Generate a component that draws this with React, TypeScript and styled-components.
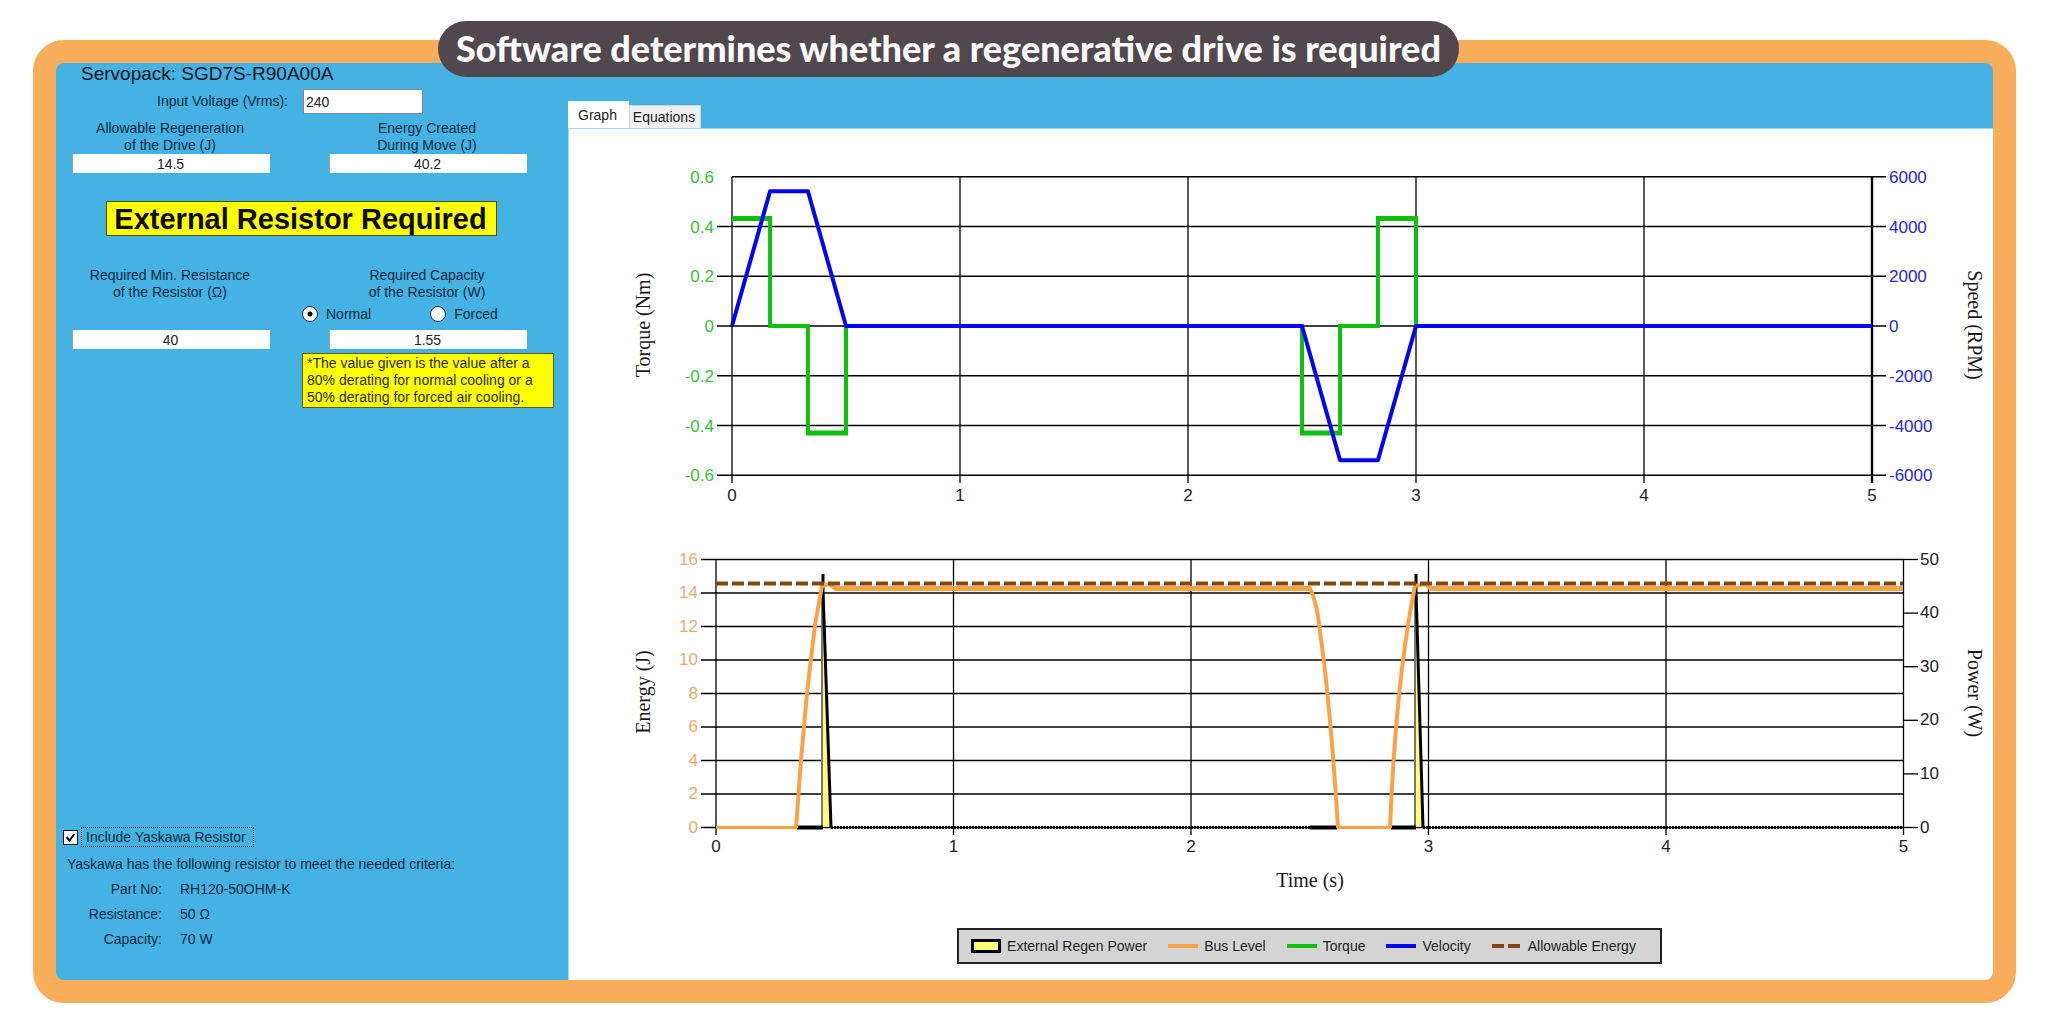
import React from "react";
import styled, { createGlobalStyle } from "styled-components";

const UI_FONT = '"Liberation Sans", Arial, sans-serif';
const SERIF_FONT = '"Liberation Serif", "Times New Roman", serif';

const GlobalStyle = createGlobalStyle`
  *, *::before, *::after { box-sizing: border-box; }
  body { margin: 0; background: #fff; }
  button, input { font: inherit; color: inherit; margin: 0; }
`;

const Page = styled.div`
  position: relative;
  display: flex;
  min-height: 100vh;
  padding: 40px 38px 31px 33px;
  font-family: ${UI_FONT};
  font-size: 14px;
  line-height: 17px;
  color: #06283f;
`;

const Banner = styled.h1`
  position: absolute;
  top: 21px;
  left: 438px;
  height: 56px;
  margin: 0;
  padding: 0 18px;
  border-radius: 28px;
  background: #50484d;
  color: #fafafa;
  font-family: Lato, sans-serif;
  font-size: 36px;
  font-weight: 900;
  line-height: 54px;
  white-space: nowrap;
`;

const Frame = styled.main`
  display: flex;
  flex: 1;
  overflow: hidden;
  border: 23px solid #faad5b;
  border-radius: 31px;
  background: #44b3e4;
`;

const Sidebar = styled.section`
  display: flex;
  flex-direction: column;
  flex: none;
  width: 512px;
  padding: 0 14px 28px 16px;
`;

const DriveName = styled.h2`
  margin: 0 0 4px 9px;
  color: #04121c;
  font-size: 19px;
  font-weight: 400;
  line-height: 22px;
`;

const VoltageRow = styled.div`
  display: flex;
  align-items: center;
  gap: 15px;
  margin-bottom: 6px;

  label {
    width: 216px;
    text-align: right;
  }
`;

const VoltageInput = styled.input`
  width: 120px;
  height: 25px;
  padding: 0 2px;
  border: 1px solid #7b8a94;
  background: #fff;
  color: #222;
`;

const Pair = styled.div`
  display: grid;
  grid-template-columns: 198px 252px;
  column-gap: 32px;
`;

const Reading = styled.div`
  display: flex;
  flex-direction: column;
  justify-content: space-between;
  align-items: center;
  text-align: center;
`;

const ReadingLabel = styled.label`
  padding-right: 2px;
  white-space: pre-line;
`;

const ReadingValue = styled.input`
  width: 198px;
  height: 19px;
  padding: 0 2px 0 0;
  border: 0;
  border-left: 1px solid #8fa5b2;
  background: #fff;
  color: #222;
  text-align: center;
`;

const Verdict = styled.strong`
  width: 391px;
  height: 35px;
  margin: 28px 0 31px 34px;
  padding-right: 2px;
  border: 1px solid #4c4c1c;
  background: #ff0;
  color: #0a0a00;
  font-size: 29px;
  line-height: 34px;
  text-align: center;
`;

const CoolingOptions = styled.div`
  display: flex;
  gap: 59px;
  align-self: flex-start;
  margin: 4px 0 7px;
`;

const CoolingOption = styled.label`
  display: flex;
  align-items: center;
  gap: 8px;
  height: 18px;
`;

const Radio = styled.input`
  appearance: none;
  width: 16px;
  height: 16px;
  border: 1px solid #1c2a33;
  border-radius: 50%;
  background: #fff;

  &:checked {
    background: radial-gradient(circle, #000 0 2px, #fff 3px);
  }
`;

const NoteRow = styled.div`
  display: flex;
  justify-content: flex-end;
  margin-top: 4px;
`;

const Note = styled.p`
  width: 252px;
  margin: 0;
  padding: 1px 4px;
  border: 1px solid #5d5a1a;
  background: #ff0;
  color: #2b2b00;
`;

const ResistorInfo = styled.section`
  margin: auto 0 0 -9px;
`;

const IncludeRow = styled.div`
  display: flex;
  align-items: center;
  gap: 4px;
  height: 20px;

  label {
    padding: 0 7px 0 4px;
    outline: 1px dotted #0b2a3a;
    line-height: 18px;
  }
`;

const TickHolder = styled.span`
  display: grid;
  width: 15px;
  height: 15px;

  > * { grid-area: 1 / 1; }
  svg { pointer-events: none; }
`;

const TickBox = styled.input`
  appearance: none;
  width: 15px;
  height: 15px;
  border: 1px solid #111;
  background: #fff;

  & + svg { visibility: hidden; }
  &:checked + svg { visibility: visible; }
`;

const Availability = styled.p`
  margin: 8px 0 4px 4px;
  line-height: 18px;
`;

const Specs = styled.dl`
  display: grid;
  grid-template-columns: 99px auto;
  column-gap: 18px;
  margin: 0;
  line-height: 25px;

  dt { text-align: right; }
  dd { margin: 0; }
`;

const Workspace = styled.section`
  display: flex;
  flex-direction: column;
  flex: 1;
  min-width: 0;
  padding-top: 38px;
`;

const TabStrip = styled.div`
  display: flex;
  align-items: flex-end;
  height: 27px;
`;

const Tab = styled.button<{ $active: boolean }>`
  width: ${(p) => (p.$active ? 61 : 72)}px;
  height: ${(p) => (p.$active ? 27 : 23)}px;
  padding: 0 2px 0 0;
  border: 1px solid ${(p) => (p.$active ? "#fff" : "#cfd4d8")};
  border-bottom: 0;
  background: ${(p) => (p.$active ? "#fff" : "#f0f0f0")};
  color: #1c1c1c;
`;

const ChartPanel = styled.div`
  flex: 1;
  background: #fff;
  box-shadow: inset 1px 1px #a5d6f0;
`;

const Plot = styled.svg`
  display: block;
  width: 100%;
  height: auto;
`;

const TickText = styled.text`
  font-family: ${UI_FONT};
  font-size: 17px;
`;

const AxisTitle = styled.text`
  fill: #1a1a1a;
  font-family: ${SERIF_FONT};
  font-size: 20px;
  text-anchor: middle;
`;

const LegendRow = styled.div`
  display: flex;
  justify-content: center;
  padding: 16px 0 16px 58px;
`;

const Legend = styled.ul`
  display: flex;
  align-items: center;
  gap: 21px;
  height: 36px;
  margin: 0;
  padding: 0 24px 0 12px;
  border: 2px solid #222;
  background: #d4d4d4;
  color: #222;
  list-style: none;
`;

const LegendItem = styled.li`
  display: flex;
  align-items: center;
  gap: 6px;
`;

const GREEN = "#0bc10b";
const BLUE = "#0404f5";
const ORANGE = "#f9a344";
const BROWN = "#80490f";

type Point = [number, number];

const toPath = (points: Point[], x: (v: number) => number, y: (v: number) => number) =>
  points.map(([a, b], i) => `${i ? "L" : "M"}${x(a)} ${y(b)}`).join("");

const SECONDS = [0, 1, 2, 3, 4, 5];

function MotionChart() {
  const x = (t: number) => 164 + 228 * t;
  const yT = (v: number) => 198 - v * 248.75;
  const yS = (v: number) => 198 - v * 0.024875;
  const torque: Point[] = [
    [0, 0.432], [0.167, 0.432], [0.167, 0], [0.333, 0], [0.333, -0.43], [0.5, -0.43], [0.5, 0],
    [2.5, 0], [2.5, -0.43], [2.667, -0.43], [2.667, 0], [2.833, 0], [2.833, 0.432], [3, 0.432], [3, 0], [5, 0],
  ];
  const speed: Point[] = [
    [0, 0], [0.167, 5420], [0.333, 5420], [0.5, 0], [2.5, 0], [2.667, -5400], [2.833, -5400], [3, 0], [5, 0],
  ];
  return (
    <Plot viewBox="0 0 1425 392" role="img" aria-label="Torque and speed over time">
      <g stroke="#000" strokeWidth={1.3}>
        {[0.6, 0.4, 0.2, 0, -0.2, -0.4, -0.6].map((v) => (
          <line key={v} x1={v === 0.6 ? 164 : 149} x2={1318} y1={yT(v)} y2={yT(v)} />
        ))}
        {SECONDS.map((t) => (
          <line key={t} x1={x(t)} x2={x(t)} y1={49} y2={355} strokeWidth={t === 5 ? 2.4 : 1.3} />
        ))}
      </g>
      {[0.6, 0.4, 0.2, 0, -0.2, -0.4, -0.6].map((v) => (
        <TickText key={v} x={146} y={yT(v) + 6} textAnchor="end" fill="#2fc52f">{v}</TickText>
      ))}
      {[6000, 4000, 2000, 0, -2000, -4000, -6000].map((v) => (
        <TickText key={v} x={1321} y={yS(v) + 6} fill="#2626e0">{v}</TickText>
      ))}
      {SECONDS.map((t) => (
        <TickText key={t} x={x(t)} y={373} textAnchor="middle" fill="#222">{t}</TickText>
      ))}
      <AxisTitle transform="translate(82 197) rotate(-90)">Torque (Nm)</AxisTitle>
      <AxisTitle transform="translate(1400 197) rotate(90)">Speed (RPM)</AxisTitle>
      <path d={toPath(torque, x, yT)} fill="none" stroke={GREEN} strokeWidth={4} />
      <path d="M164 90.5H204M808 90.5H850M238 305H280M732 305H774" stroke={GREEN} strokeWidth={5} />
      <path d={toPath(speed, x, yS)} fill="none" stroke={BLUE} strokeWidth={4} strokeLinejoin="round" />
    </Plot>
  );
}

function EnergyChart() {
  const x = (t: number) => 148 + 237.5 * t;
  const yE = (v: number) => 307.5 - v * 16.75;
  const yP = (v: number) => 307.5 - v * 5.36;
  return (
    <Plot viewBox="0 0 1425 392" role="img" aria-label="Energy and power over time">
      <g stroke="#000" strokeWidth={1.3}>
        {[16, 14, 12, 10, 8, 6, 4, 2, 0].map((v) => (
          <line key={v} x1={133} x2={1335} y1={yE(v)} y2={yE(v)} />
        ))}
        {[50, 40, 30, 20, 10, 0].map((v) => (
          <line key={v} x1={1335} x2={1350} y1={yP(v)} y2={yP(v)} />
        ))}
        {SECONDS.map((t) => (
          <line key={t} x1={x(t)} x2={x(t)} y1={39} y2={315} />
        ))}
      </g>
      {[16, 14, 12, 10, 8, 6, 4, 2, 0].map((v) => (
        <TickText key={v} x={130} y={yE(v) + 5} textAnchor="end" fill="#f0a868">{v}</TickText>
      ))}
      {[50, 40, 30, 20, 10, 0].map((v) => (
        <TickText key={v} x={1352} y={yP(v) + 5} fill="#222">{v}</TickText>
      ))}
      {SECONDS.map((t) => (
        <TickText key={t} x={x(t)} y={332} textAnchor="middle" fill="#222">{t}</TickText>
      ))}
      <AxisTitle transform="translate(82 172) rotate(-90)">Energy (J)</AxisTitle>
      <AxisTitle transform="translate(1400 173) rotate(90)">Power (W)</AxisTitle>
      <AxisTitle x={742} y={367}>Time (s)</AxisTitle>

      {/* external regen power spikes */}
      <path d="M255 307L255 55L262 307Z" fill="#fdfd78" />
      <path d="M848 307L848 55L855 307Z" fill="#fdfd78" />
      <path d="M254 307V70M847 307V70" stroke="#777" strokeWidth={2} fill="none" />
      <path d="M255 54V70L263 307.5M848 54V70L855 307.5" stroke="#000" strokeWidth={3} fill="none" />
      <path d="M263 307.5H742M855 307.5H1335" stroke="#000" strokeWidth={3} strokeDasharray="2 1" />
      <path d="M229 307.5H255M742 307.5H769M823 307.5H848" stroke="#000" strokeWidth={4} />

      {/* bus level */}
      <path d="M148 307.5H229M769 307.5H823" stroke={ORANGE} strokeWidth={3} />
      <path
        d="M228 308L233 240L239 173L247 105L254 66L261 64L267 68.5H742Q749 82 752 112Q762 180 770 308M822 308Q828 160 847 66L858 64L862 68.5"
        fill="none" stroke={ORANGE} strokeWidth={4} strokeLinejoin="round"
      />
      <path d="M267 68.5H743M862 68.5H1335" stroke={ORANGE} strokeWidth={5} />

      <path d="M148 63.5H1335" stroke={BROWN} strokeWidth={4} strokeDasharray="12 4" />
    </Plot>
  );
}

const Swatch = ({ color, dashed = false }: { color: string; dashed?: boolean }) => (
  <svg width="30" height="14" aria-hidden="true">
    <line x1="0" x2="30" y1="7" y2="7" stroke={color} strokeWidth="4" strokeDasharray={dashed ? "12 4" : undefined} />
  </svg>
);

const LEGEND = [
  { name: "Bus Level", color: ORANGE },
  { name: "Torque", color: GREEN },
  { name: "Velocity", color: BLUE },
  { name: "Allowable Energy", color: BROWN, dashed: true },
];

export default function App() {
  const [tab, setTab] = React.useState("Graph");
  return (
    <Page>
      <GlobalStyle />
      <Frame>
        <Sidebar>
          <DriveName>Servopack: SGD7S-R90A00A</DriveName>
          <VoltageRow>
            <label htmlFor="voltage">Input Voltage (Vrms):</label>
            <VoltageInput id="voltage" defaultValue="240" />
          </VoltageRow>
          <Pair>
            <Reading>
              <ReadingLabel htmlFor="allowable">{"Allowable Regeneration\nof the Drive (J)"}</ReadingLabel>
              <ReadingValue id="allowable" readOnly value="14.5" />
            </Reading>
            <Reading>
              <ReadingLabel htmlFor="created">{"Energy Created\nDuring Move (J)"}</ReadingLabel>
              <ReadingValue id="created" readOnly value="40.2" />
            </Reading>
          </Pair>
          <Verdict>External Resistor Required</Verdict>
          <Pair>
            <Reading>
              <ReadingLabel htmlFor="resistance">{"Required Min. Resistance\nof the Resistor (Ω)"}</ReadingLabel>
              <ReadingValue id="resistance" readOnly value="40" />
            </Reading>
            <Reading>
              <ReadingLabel htmlFor="capacity">{"Required Capacity\nof the Resistor (W)"}</ReadingLabel>
              <CoolingOptions>
                <CoolingOption><Radio type="radio" name="cooling" defaultChecked />Normal</CoolingOption>
                <CoolingOption><Radio type="radio" name="cooling" />Forced</CoolingOption>
              </CoolingOptions>
              <ReadingValue id="capacity" readOnly value="1.55" />
            </Reading>
          </Pair>
          <NoteRow>
            <Note>
              *The value given is the value after a 80% derating for normal cooling or a 50% derating for forced air cooling.
            </Note>
          </NoteRow>
          <ResistorInfo>
            <IncludeRow>
              <TickHolder>
                <TickBox id="include" type="checkbox" defaultChecked />
                <svg width="15" height="15" viewBox="0 0 15 15" aria-hidden="true">
                  <path d="M3.500 7L6.500 10.500L11.500 4" fill="none" stroke="#000" strokeWidth="2" />
                </svg>
              </TickHolder>
              <label htmlFor="include">Include Yaskawa Resistor</label>
            </IncludeRow>
            <Availability>Yaskawa has the following resistor to meet the needed criteria:</Availability>
            <Specs>
              <dt>Part No:</dt><dd>RH120-50OHM-K</dd>
              <dt>Resistance:</dt><dd>50 Ω</dd>
              <dt>Capacity:</dt><dd>70 W</dd>
            </Specs>
          </ResistorInfo>
        </Sidebar>
        <Workspace>
          <TabStrip role="tablist">
            {["Graph", "Equations"].map((name) => (
              <Tab key={name} role="tab" aria-selected={tab === name} $active={tab === name} onClick={() => setTab(name)}>
                {name}
              </Tab>
            ))}
          </TabStrip>
          <ChartPanel role="tabpanel">
            <MotionChart />
            <EnergyChart />
            <LegendRow>
              <Legend>
                <LegendItem>
                  <svg width="30" height="14" aria-hidden="true">
                    <rect x="1.500" y="1.500" width="27" height="11" fill="#fdfd78" stroke="#000" strokeWidth="3" />
                  </svg>
                  External Regen Power
                </LegendItem>
                {LEGEND.map((item) => (
                  <LegendItem key={item.name}>
                    <Swatch color={item.color} dashed={item.dashed} />
                    {item.name}
                  </LegendItem>
                ))}
              </Legend>
            </LegendRow>
          </ChartPanel>
        </Workspace>
      </Frame>
      <Banner>Software determines whether a regenerative drive is required</Banner>
    </Page>
  );
}
